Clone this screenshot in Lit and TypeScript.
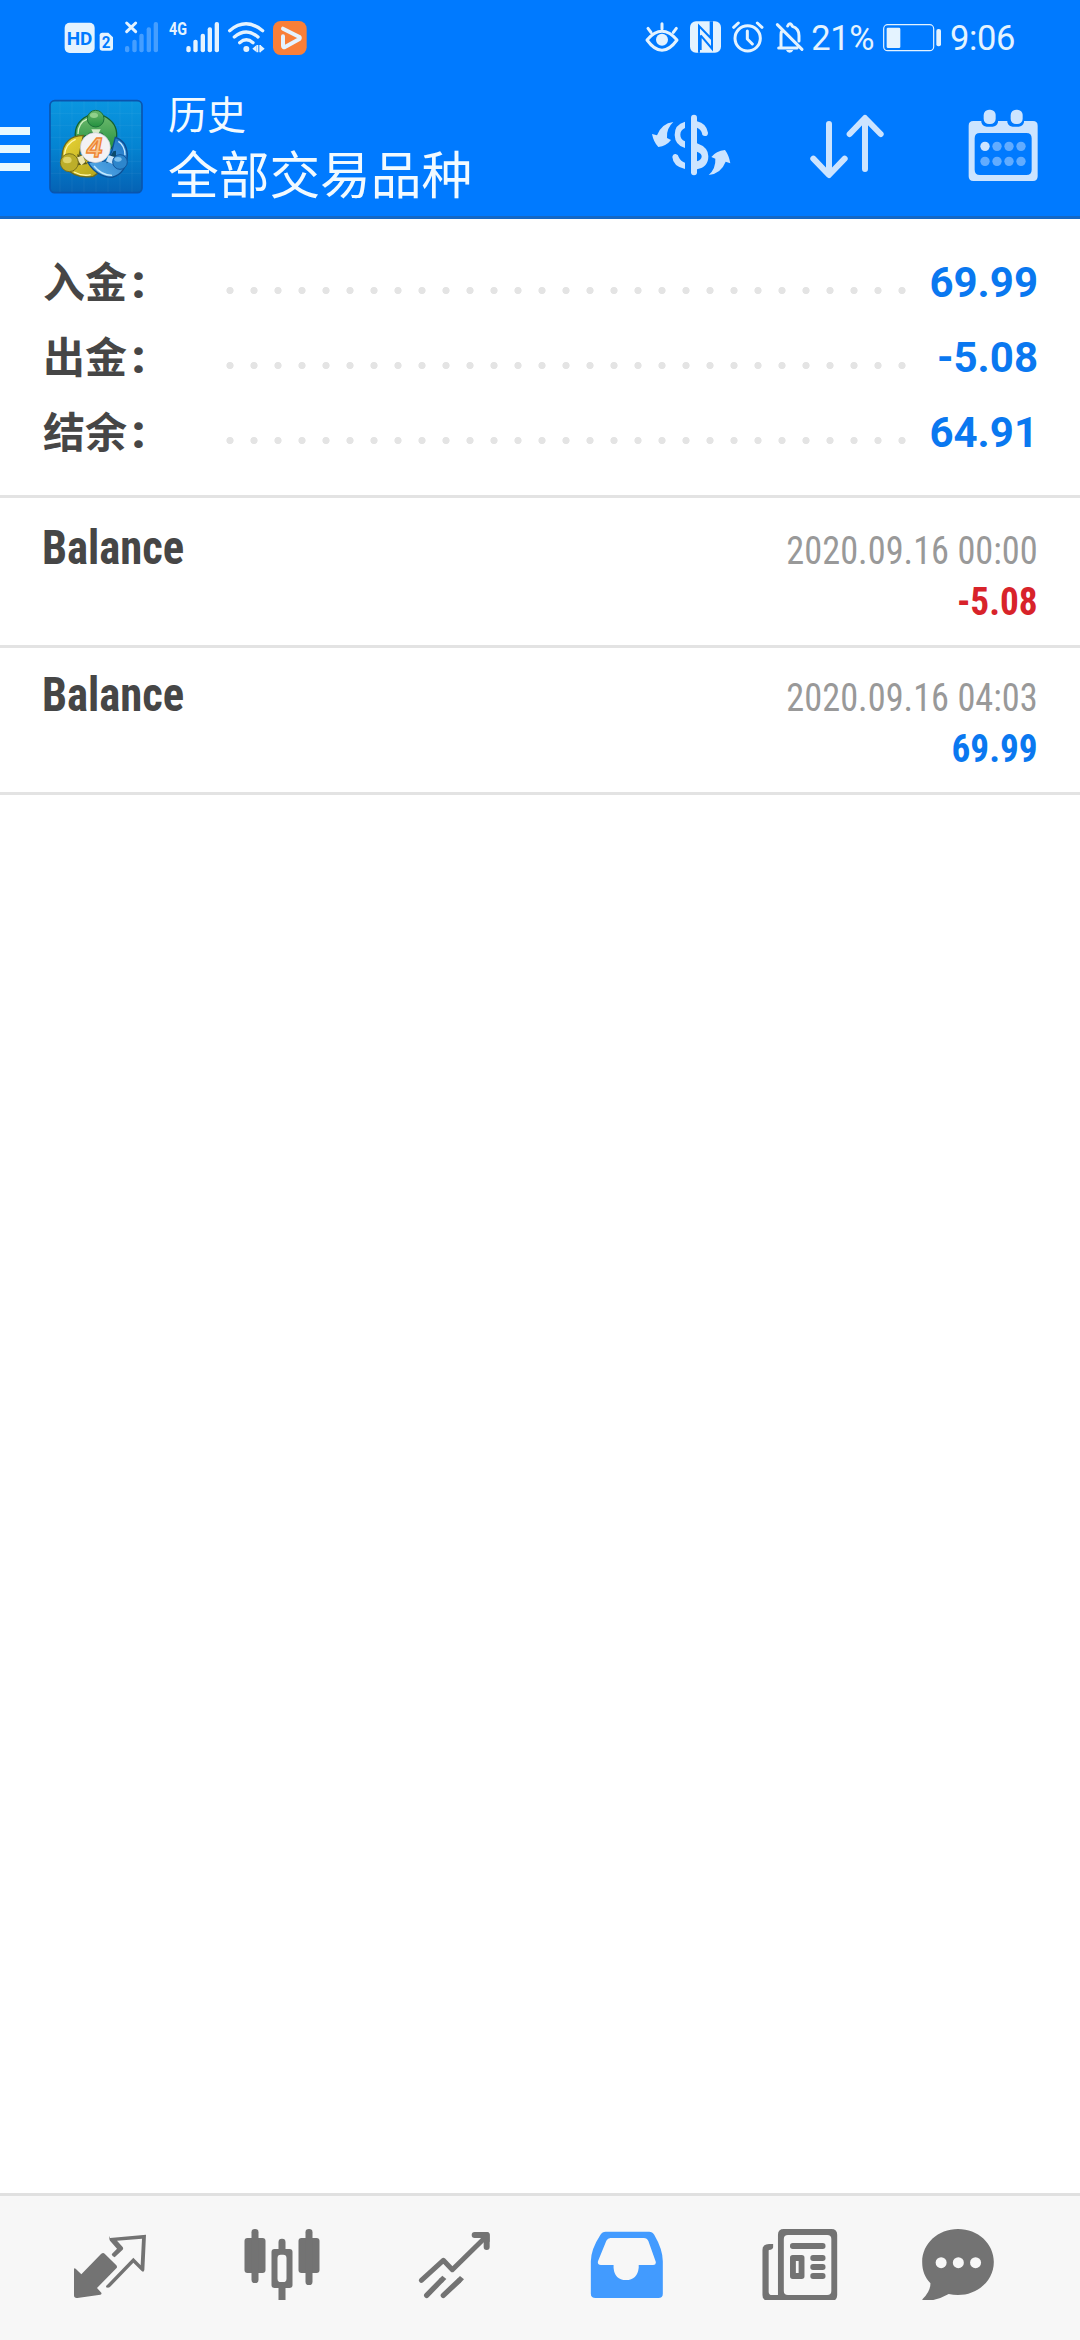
import { LitElement, html, css, svg } from 'lit';
import { customElement, property } from 'lit/decorators.js';
import { classMap } from 'lit/directives/class-map.js';

@customElement('status-bar')
class StatusBar extends LitElement {
  static styles = css`
    :host {
      display: flex;
      align-items: flex-start;
      height: 75px;
      padding-left: 63.33px;
      box-sizing: border-box;
      color: #e4f3ff;
      font-family: Roboto, sans-serif;
      font-size: 34.5px;
      line-height: 77px;
      white-space: nowrap;
    }
    svg {
      display: block;
      flex: none;
      height: 75px;
      fill: #e4f3ff;
    }
    .group {
      display: flex;
    }
    .right {
      margin-left: 333px;
    }
    .level {
      width: 69.7px;
      padding-left: 3px;
      letter-spacing: -0.4px;
    }
    .time {
      padding-left: 5px;
      letter-spacing: -0.4px;
    }
    .line {
      fill: none;
      stroke: #e4f3ff;
      stroke-linecap: round;
      stroke-linejoin: round;
    }
    .cut {
      fill: #007aff;
    }
    .cut-line {
      fill: none;
      stroke: #007aff;
    }
    .faded {
      opacity: 0.3;
    }
    .badge {
      font-family: Roboto, sans-serif;
      font-weight: 700;
    }
  `;

  render() {
    return html`
      <div class="group">
        <svg width="55" viewBox="40 0 165 225">
          <rect x="45" y="68" width="90" height="91" rx="15" />
          <text class="badge cut" x="51" y="134" font-size="57" textLength="77" lengthAdjust="spacingAndGlyphs">HD</text>
          <path d="M158 98h18l14 14v32q0 8-8 8h-24q-8 0-8-8v-38q0-8 8-8z" />
          <text class="badge cut" x="156" y="145" font-size="50" textLength="26" lengthAdjust="spacingAndGlyphs">2</text>
        </svg>
        <svg width="47" viewBox="205 0 141 225">
          <path class="line" stroke-width="9" d="M231 69l27 26M258 69l-27 26" />
          <g class="faded">
            <rect x="226" y="138" width="13" height="19" rx="6" />
            <rect x="248" y="119" width="13" height="38" rx="6" />
            <rect x="269" y="101" width="13" height="56" rx="6" />
            <rect x="291" y="82" width="13" height="75" rx="6" />
            <rect x="312" y="66" width="13" height="91" rx="6" />
          </g>
        </svg>
        <svg width="59" viewBox="346 0 177 225">
          <text class="badge" x="358" y="106" font-size="54" textLength="54" lengthAdjust="spacingAndGlyphs">4G</text>
          <rect x="410" y="138" width="13" height="19" rx="6" />
          <rect x="431" y="119" width="13" height="38" rx="6" />
          <rect x="453" y="101" width="13" height="56" rx="6" />
          <rect x="474" y="82" width="13" height="75" rx="6" />
          <rect x="495" y="66" width="13" height="91" rx="6" />
        </svg>
        <svg width="46" viewBox="523 0 138 225">
          <path class="line" stroke-width="10" d="M540 92q49-41 99 0M554 111q36-30 71 0M570 128q20-17 40 0" />
          <circle cx="590" cy="147" r="9" />
          <path d="M621 135v22l-13-11zM632 135v22l13-11z" />
          <path d="M621 135v22h5v-22zM629 135v22h5v-22z" />
        </svg>
        <svg width="40" viewBox="661 0 120 225">
          <rect x="670" y="63" width="101" height="102" rx="23" fill="#f97f38" />
          <path class="line" stroke-width="12" d="M700 86l48 24q5 4 0 8l-42 23q-6 2-6-4v-28" />
        </svg>
      </div>
      <div class="group right">
        <svg width="40" viewBox="40 0 120 225">
          <path class="line" stroke-width="9" d="M52 120q45-52 90 0q-45 62-90 0zM97 71v16M55 85l9 12M140 85l-9 12" />
          <circle cx="97" cy="119" r="18" />
        </svg>
        <svg width="45" viewBox="160 0 135 225">
          <rect x="181" y="64" width="93" height="94" rx="18" />
          <path class="cut-line" stroke-width="6" d="M208 158V78L243 114V64M213 106V150M213 106L247 146V64" />
        </svg>
        <svg width="45" viewBox="295 0 135 225">
          <circle class="line" cx="354" cy="115" r="38" stroke-width="9" />
          <path class="line" stroke-width="9" d="M312 82l14-13M397 82l-14-13M353 93v24l15 15" />
        </svg>
        <svg width="35" viewBox="430 0 105 225">
          <path class="line" stroke-width="9" d="M443 74l74 74M447 144h55M454 142V104q0-8 3-12M474 78q3-7 7-7t7 8q20 6 20 28v16" />
          <path d="M469 150h22q-3 8-11 8t-11-8z" />
        </svg>
        <span class="level">21%</span>
        <svg width="64" viewBox="753 0 192 225">
          <rect class="line" x="761" y="74" width="150" height="78" rx="12" stroke-width="3.5" />
          <rect x="770" y="83" width="41" height="61" rx="4" />
          <rect x="919" y="87" width="14" height="52" rx="6" />
        </svg>
        <span class="time">9:06</span>
      </div>
    `;
  }
}

@customElement('app-toolbar')
class AppToolbar extends LitElement {
  static styles = css`
    :host {
      display: flex;
      height: 144px;
      box-sizing: border-box;
      padding-right: 37.5px;
      border-bottom: 3px solid #1468c6;
      color: #f2faff;
      font-family: 'Noto Sans CJK SC', sans-serif;
    }
    svg {
      display: block;
      flex: none;
      height: 141px;
      fill: #cce4ff;
    }
    .titles {
      flex: 1;
      padding: 15px 0 0 18px;
      white-space: nowrap;
    }
    .subtitle {
      font-size: 39px;
      line-height: 44px;
    }
    .title {
      font-size: 50.7px;
      line-height: 76px;
    }
    .actions {
      display: flex;
      gap: 76px;
    }
    .line {
      fill: none;
      stroke: #cce4ff;
      stroke-linecap: round;
      stroke-linejoin: round;
    }
    .menu {
      fill: #e8f8ff;
    }
    .four {
      font-family: 'Liberation Sans', sans-serif;
      font-weight: 700;
      font-style: italic;
    }
  `;

  render() {
    return html`
      <svg class="menu" width="40" viewBox="0 -15 120 423">
        <path d="M0 141h90v24H0zM0 195h90v24H0zM0 249h90v24H0z" />
      </svg>
      <svg width="110" viewBox="120 -15 330 423">
        <defs>
          <linearGradient id="tile" x1="0" y1="0" x2="0" y2="1">
            <stop offset="0" stop-color="#0a96e0" />
            <stop offset="0.5" stop-color="#0484d2" />
            <stop offset="1" stop-color="#0562b4" />
          </linearGradient>
          <linearGradient id="green" x1="0" y1="0" x2="0" y2="1">
            <stop offset="0" stop-color="#6cb86c" />
            <stop offset="1" stop-color="#23913f" />
          </linearGradient>
          <linearGradient id="yellow" x1="0" y1="0" x2="1" y2="1">
            <stop offset="0" stop-color="#ecd636" />
            <stop offset="1" stop-color="#b3a51c" />
          </linearGradient>
          <linearGradient id="blue" x1="0" y1="1" x2="1" y2="0">
            <stop offset="0" stop-color="#5cb0ea" />
            <stop offset="1" stop-color="#1a72c4" />
          </linearGradient>
        </defs>
        <rect x="150" y="62" width="276" height="276" rx="14" fill="url(#tile)" stroke="#0a55ae" stroke-width="5" />
        <path d="M180 64v272M216 64v272M252 64v272M288 64v272M324 64v272M360 64v272M396 64v272M152 100h272M152 136h272M152 172h272M152 208h272M152 244h272M152 280h272" stroke="#fff" stroke-opacity="0.05" stroke-width="3" />
        <path d="M226 172q-4-44 36-64h50q40 20 38 60 0 26-20 40l-44-46-30 6z" fill="url(#green)" stroke="#14602f" stroke-width="4" />
        <path d="M234 162q0-34 30-46" fill="none" stroke="#d2f0c4" stroke-width="4" />
        <path d="M250 166q-60 2-64 62 0 20 10 34 30 36 84 27l14-10-30-36-26-20z" fill="url(#yellow)" stroke="#6c6a1c" stroke-width="4" />
        <path d="M193 228q2-38 34-50M222 276q26 14 50 8" fill="none" stroke="#fff6a8" stroke-width="4" />
        <path d="M346 172q34 10 36 52-2 56-46 68-44 0-72-44l60-6 12-30z" fill="url(#blue)" stroke="#0c4f94" stroke-width="4" />
        <path d="M355 184q20 12 20 42M282 258q22 28 54 28" fill="none" stroke="#c2e8ff" stroke-width="4" />
        <path d="M318 250l22-36 8-2v24z" fill="#0b4a6c" />
        <path d="M232 222l16 10 14 20-28 4z" fill="#5c5a1c" />
        <path d="M268 158l-8 10 26-8 32 16-12-18z" fill="#14502f" />
        <path d="M228 234l20-8 8 20-12 10z" fill="#f0e8b0" />
        <path d="M346 232l-20-6-8 18 20 8z" fill="#c8e4fa" />
        <path d="M274 148h28l-6 12h-16z" fill="#d4ecc8" />
        <circle cx="287" cy="116" r="25" fill="url(#green)" stroke="#1a7038" stroke-width="3" />
        <circle cx="208" cy="248" r="27" fill="#bcae2a" stroke="#77701c" stroke-width="3" />
        <ellipse cx="202" cy="240" rx="13" ry="10" fill="#e0d468" />
        <circle cx="360" cy="246" r="22" fill="#2d86cc" stroke="#12569c" stroke-width="3" />
        <ellipse cx="354" cy="238" rx="11" ry="7" fill="#7cc0ee" />
        <ellipse cx="282" cy="106" rx="12" ry="8" fill="#90d08a" />
        <circle cx="286" cy="203" r="45" fill="#f3f2f4" stroke="#c9ccd2" stroke-width="2" />
        <text class="four" x="261" y="231" font-size="82" textLength="46" lengthAdjust="spacingAndGlyphs" fill="#fac48a" stroke="#ee8432" stroke-width="4">4</text>
      </svg>
      <div class="titles">
        <div class="subtitle">历史</div>
        <div class="title">全部交易品种</div>
      </div>
      <div class="actions">
        <svg width="80" viewBox="90 -45 240 423">
          <path d="M157 96q-22 20-19 48l12 6q-14 18-38 21-14-14-19-39l15 4q14-36 49-40z" />
          <path d="M263 255q22-20 20-49l-12-5q14-18 41-21 12 16 16 40l-14-5q-14 36-51 40z" />
          <rect x="210" y="74" width="18" height="182" rx="9" />
          <path d="M192 95v19q-14 6-14 20t14 20v20q-30-8-31-39t31-40z" />
          <path d="M192 237q-36-8-38-36 2-10 10-9t9 9q5 12 19 17z" />
          <path d="M228 94q28 6 33 34 0 10-9 10t-9-8q-3-12-15-17z" />
          <path fill-rule="evenodd" d="M228 160q34 12 34 39 0 33-34 39zM228 185v29q14-4 14-15 0-9-14-14z" />
        </svg>
        <svg width="80" viewBox="558 -45 240 423">
          <path class="line" stroke-width="18" d="M624 102v151M577 206l47 49 47-49M732 237V87M686 132l46-48 47 48" />
        </svg>
        <svg width="80" viewBox="1027 -45 240 423">
          <path fill-rule="evenodd" d="M1058 93h24v4q4 13 16 13h18q12 0 16-13v-4h28v4q4 13 16 13h18q12 0 16-13v-4h27q14 0 14 14v152q0 14-14 14h-179q-14 0-14-14V107q0-14 14-14zM1078 129q-16 0-16 16v94q0 16 16 16h139q16 0 16-16v-94q0-16-16-16z" />
          <rect x="1089" y="59" width="36" height="43" rx="16" />
          <rect x="1170" y="59" width="36" height="43" rx="16" />
          ${[0, 1, 2, 3, 4, 5, 6, 7].map(
            (i) => svg`<circle cx=${1093 + (i % 4) * 36} cy=${i < 4 ? 169 : 214} r="14" fill-opacity=${i === 0 ? 1 : 0.48} />`
          )}
        </svg>
      </div>
    `;
  }
}

@customElement('summary-row')
class SummaryRow extends LitElement {
  static styles = css`
    :host {
      display: flex;
      height: 75px;
      line-height: 75px;
      padding: 0 42px 0 43px;
      font-size: 42px;
      font-weight: 700;
      white-space: nowrap;
    }
    .label {
      width: 175px;
      line-height: 69px;
      color: #464646;
      font-family: 'Noto Sans CJK SC', sans-serif;
    }
    .colon {
      font-family: Roboto, sans-serif;
      font-size: 47px;
      font-weight: 900;
      padding-left: 4.5px;
    }
    .dots {
      width: 696px;
      background: radial-gradient(circle, #e4e4e4 3.2px, transparent 4px) 0 8px / 24px 75px repeat-x;
    }
    .value {
      flex: 1;
      text-align: right;
      color: #0a78f0;
      font-family: Roboto, sans-serif;
    }
  `;

  @property() label = '';
  @property() value = '';

  render() {
    return html`
      <span class="label">${this.label}<span class="colon">:</span></span>
      <span class="dots"></span>
      <span class="value">${this.value}</span>
    `;
  }
}

@customElement('history-record')
class HistoryRecord extends LitElement {
  static styles = css`
    :host {
      display: flex;
      justify-content: space-between;
      height: 147px;
      box-sizing: border-box;
      padding: 0 42px;
      border-bottom: 3px solid #e3e3e3;
      font-family: 'Roboto Condensed', Roboto, sans-serif;
      font-stretch: 75%;
      white-space: nowrap;
    }
    .name {
      font-size: 48px;
      font-weight: 700;
      line-height: 56px;
      padding-top: 19px;
      color: #464646;
      transform: scaleX(0.93);
      transform-origin: left;
    }
    .details {
      padding-top: 25px;
      text-align: right;
      font-size: 39px;
      line-height: 51px;
    }
    .date {
      color: #999;
      transform: scaleX(0.932);
      transform-origin: right;
    }
    .amount {
      font-weight: 700;
      color: #0a78f0;
      transform: scaleX(0.955);
      transform-origin: right;
    }
    .loss {
      color: #d8232a;
    }
  `;

  @property() name = '';
  @property() date = '';
  @property() amount = '';

  render() {
    return html`
      <div class="name">${this.name}</div>
      <div class="details">
        <div class="date">${this.date}</div>
        <div class=${classMap({ amount: true, loss: this.amount.startsWith('-') })}>${this.amount}</div>
      </div>
    `;
  }
}

@customElement('bottom-nav')
class BottomNav extends LitElement {
  static styles = css`
    :host {
      display: grid;
      grid-template-columns: 171.5px 172px 172px 174px 173px 143px;
      justify-items: center;
      height: 147px;
      box-sizing: border-box;
      padding: 24px 0 0 24px;
      border-top: 3px solid #e0e0e0;
      background: #f7f7f7;
    }
    svg {
      display: block;
      width: 80px;
      height: 80px;
      fill: #737373;
    }
    .line {
      fill: none;
      stroke: #737373;
      stroke-linecap: round;
      stroke-linejoin: round;
    }
    .active {
      fill: #429bff;
    }
    .hole {
      fill: #f7f7f7;
    }
  `;

  render() {
    return html`
      <svg viewBox="90 120 240 240">
        <path d="M102 268q0-6 5-2l17 17 59-61q6-5 11-1l35 35q4 5 0 9l-58 59 13 14q2 5-3 6l-69 10q-10 1-10-8z" />
        <path d="M210 174l108-10-5 106q-2 8-8 3l-25-25-68 71q-4 6-14 3-1-4 4-8l78-81 22 23 4-80-75 6 17 19q3 4 0 8l-24 23q-8-3-9-9l16-17-21-24q-4-7 0-14z" />
      </svg>
      <svg viewBox="604.5 120 240 240">
        <rect x="612" y="174" width="63" height="105" rx="9" />
        <rect x="633" y="147" width="21" height="162" rx="10" />
        <rect x="774" y="174" width="63" height="105" rx="9" />
        <rect x="795" y="147" width="21" height="168" rx="10" />
        <rect x="714" y="176" width="21" height="50" rx="10" />
        <rect x="714" y="310" width="21" height="59" rx="10" />
        <rect x="693" y="207" width="63" height="117" rx="9" />
        <rect class="hole" x="711" y="224" width="27" height="82" rx="10" />
      </svg>
      <svg viewBox="1120 120 240 240">
        <path class="line" stroke-width="15" d="M1142 301l66-60 27 28 100-98" />
        <path class="line" stroke-width="18" d="M1302 165h36v36" />
        <path d="M1318 156h19q10 0 10 10v19l-12 4-20-20z" />
        <path class="line" stroke-width="16" d="M1158 346l42-43M1208 346l46-43" />
        <path d="M1194 298l11-11 12 10-11 11zM1248 298l10-10 12 10-11 11z" />
      </svg>
      <svg class="active" viewBox="135.85 120 232.3 240" preserveAspectRatio="none">
        <path fill-rule="evenodd" d="M190 155h126q10 0 15 9 25 44 25 80v97q0 13-13 13H161q-14 0-14-13v-97q0-36 28-80 5-9 15-9zM204 174q-8 0-12 8l-24 61q-3 12 8 12h37v8q3 37 36 37t37-37v-8h42q10 0 7-11l-21-61q-4-9-13-9z" />
      </svg>
      <svg viewBox="638.85 120 232.3 240" preserveAspectRatio="none">
        <path fill-rule="evenodd" d="M708 147h138q17 0 17 17v181q0 18-17 18H665q-19 0-19-18V210q0-18 19-18h12v10q-2 8-12 8-1 0-1 3v122q0 10 10 10h17V164q0-17 17-17zM720 165q-12 0-12 12v156q0 12 12 12h114q12 0 12-12V177q0-12-12-12z" />
        <rect x="726" y="189" width="103" height="18" rx="8" />
        <path fill-rule="evenodd" d="M734 225h26q8 0 8 8v56q0 8-8 8h-26q-8 0-8-8v-56q0-8 8-8zM743 243v36h8v-36z" />
        <rect x="785" y="225" width="44" height="18" rx="8" />
        <rect x="785" y="252" width="44" height="18" rx="8" />
        <rect x="785" y="279" width="44" height="18" rx="8" />
      </svg>
      <svg viewBox="1096.85 120 232.3 240" preserveAspectRatio="none">
        <path d="M1213 147c58 0 104 44 104 99s-46 99-104 99q-14 0-27-3-34 20-69 21-11-1-6-7 22-22 22-46c-16-18-24-38-24-64 0-55 46-99 104-99z" />
        <ellipse class="hole" cx="1164" cy="248" rx="16" ry="16.5" />
        <ellipse class="hole" cx="1214" cy="248" rx="16" ry="16.5" />
        <ellipse class="hole" cx="1264" cy="248" rx="16" ry="16.5" />
      </svg>
    `;
  }
}

@customElement('app-root')
class AppRoot extends LitElement {
  static styles = css`
    :host {
      display: flex;
      flex-direction: column;
      height: 2340px;
      background: #fff;
    }
    .header {
      background: #007aff;
    }
    .summary {
      padding: 26px 0 25px;
      border-bottom: 3px solid #e3e3e3;
    }
    .records {
      flex: 1;
      padding-top: 3px;
    }
  `;

  summary = [
    { label: '入金', value: '69.99' },
    { label: '出金', value: '-5.08' },
    { label: '结余', value: '64.91' },
  ];

  records = [
    { name: 'Balance', date: '2020.09.16 00:00', amount: '-5.08' },
    { name: 'Balance', date: '2020.09.16 04:03', amount: '69.99' },
  ];

  render() {
    return html`
      <div class="header">
        <status-bar></status-bar>
        <app-toolbar></app-toolbar>
      </div>
      <div class="summary">
        ${this.summary.map((s) => html`<summary-row .label=${s.label} .value=${s.value}></summary-row>`)}
      </div>
      <div class="records">
        ${this.records.map(
          (r) => html`<history-record .name=${r.name} .date=${r.date} .amount=${r.amount}></history-record>`
        )}
      </div>
      <bottom-nav></bottom-nav>
    `;
  }
}
